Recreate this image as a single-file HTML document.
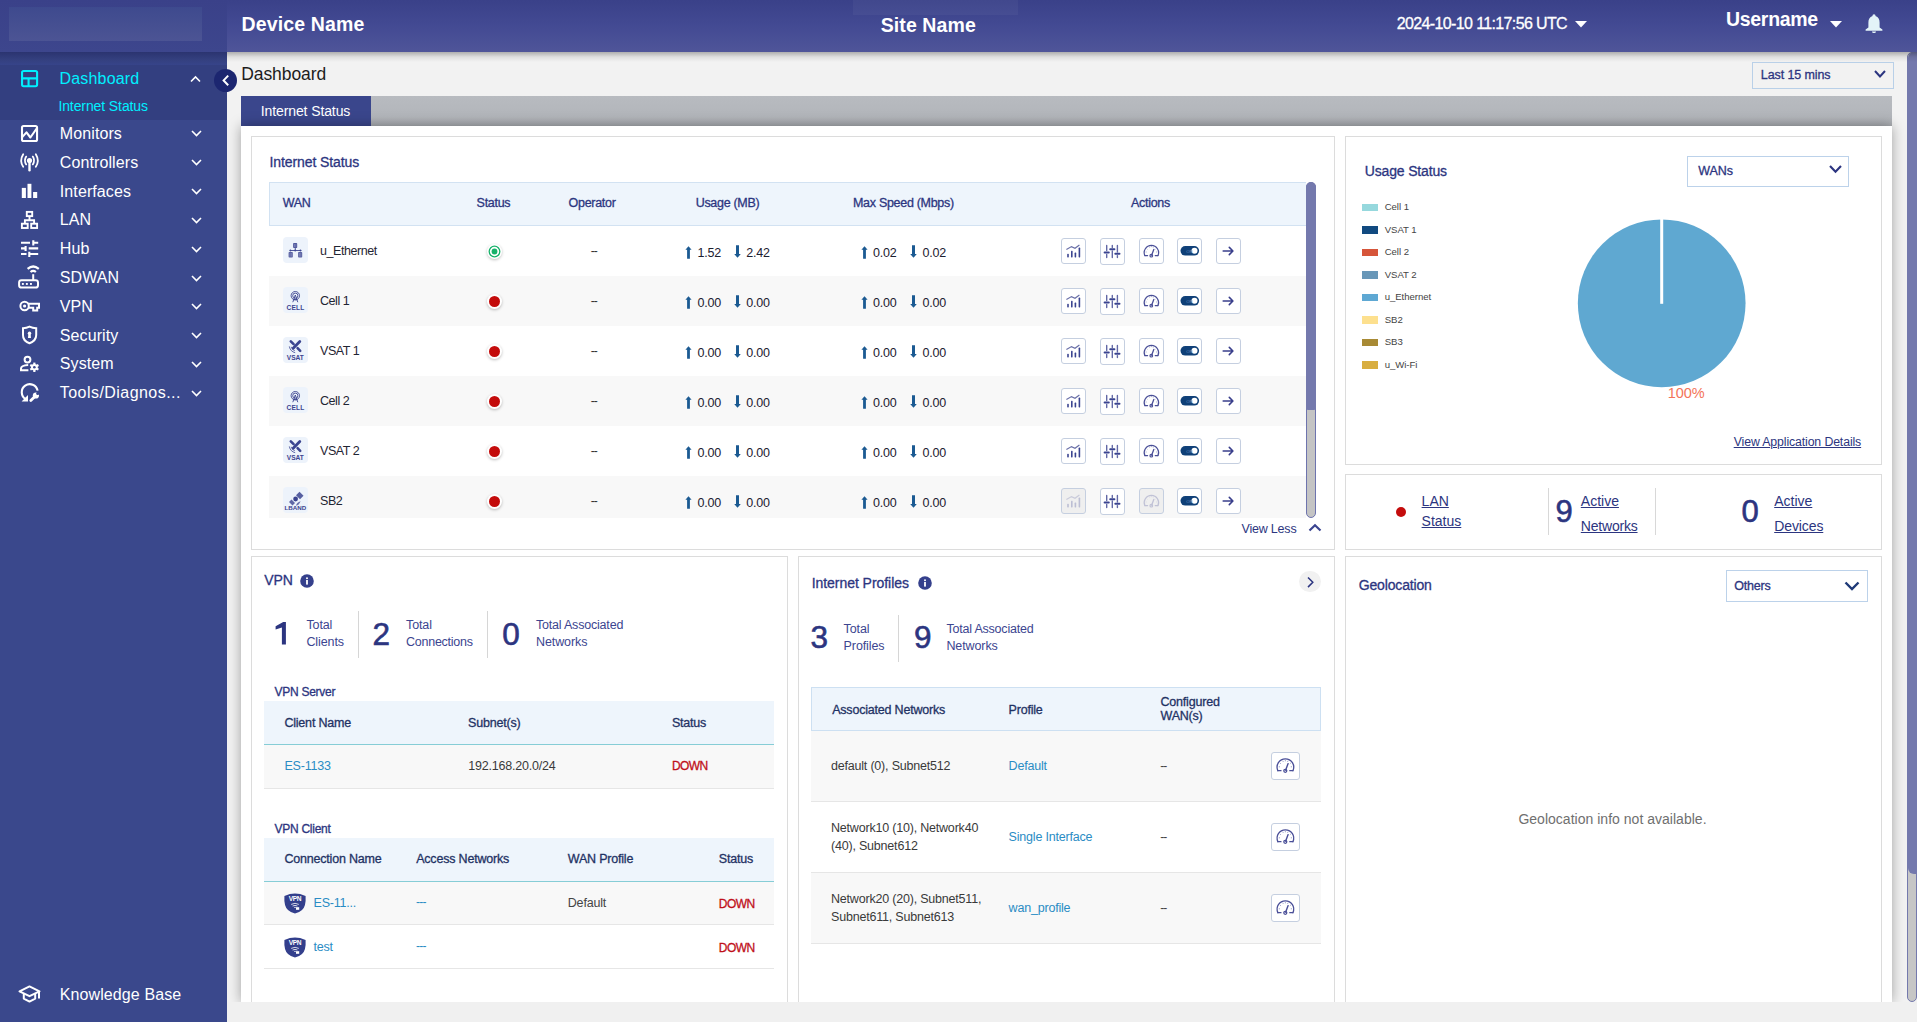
<!DOCTYPE html>
<html><head><meta charset="utf-8"><title>Dashboard</title>
<style>
html,body{margin:0;padding:0;}
body{width:1917px;height:1022px;overflow:hidden;position:relative;background:#f2f2f2;font-family:'Liberation Sans', sans-serif;}
.a{position:absolute;box-sizing:border-box;}
.t{position:absolute;white-space:nowrap;}
svg.a{overflow:visible;}
</style></head><body>
<div class="a" style="left:227px;top:0px;width:1690px;height:52px;background:linear-gradient(180deg,#3a4189 0%,#434a93 50%,#4f5599 100%);"></div><div class="a" style="left:0px;top:0px;width:227px;height:52px;background:linear-gradient(180deg,#3a4189 0%,#3d468d 100%);"></div><div class="a" style="left:9px;top:7px;width:193px;height:34px;background:linear-gradient(180deg,#3e4a8e 0%,#4c5494 100%);"></div><div class="a" style="left:853px;top:0px;width:165px;height:15px;background:rgba(255,255,255,0.04);"></div><div class="a" style="left:227px;top:52px;width:1690px;height:10px;background:linear-gradient(180deg,rgba(0,0,0,0.28) 0%,rgba(0,0,0,0.08) 50%,rgba(0,0,0,0) 100%);z-index:5;"></div><div class="t " style="left:241.5px;top:14.79px;font-size:19.5px;line-height:19.5px;color:#fff;font-weight:700;letter-spacing:0.15px;">Device Name</div><div class="t " style="left:880.7px;top:15.89px;font-size:19.5px;line-height:19.5px;color:#fff;font-weight:700;letter-spacing:0.1px;">Site Name</div><div class="t " style="left:1396.8px;top:16.26px;font-size:16px;line-height:16px;color:#fff;-webkit-text-stroke:0.3px currentColor;letter-spacing:-0.63px;">2024-10-10 11:17:56 UTC</div><svg class="a" style="left:1575px;top:21px;" width="12" height="7" viewBox="0 0 12 7"><path d="M0 0 L12 0 L6 6.5 Z" fill="#fff"/></svg><div class="t " style="left:1726px;top:9.89px;font-size:19.5px;line-height:19.5px;color:#fff;font-weight:700;letter-spacing:-0.3px;">Username</div><svg class="a" style="left:1830px;top:21px;" width="12" height="7" viewBox="0 0 12 7"><path d="M0 0 L12 0 L6 6.5 Z" fill="#fff"/></svg><svg class="a" style="left:1865px;top:14px;" width="18" height="21" viewBox="0 0 18 21"><path d="M9 0.3 C10.1 0.3 10.5 1.1 10.5 2 C13.4 2.9 14.6 5.4 14.6 8.6 L14.6 13.6 L17.4 15.4 L17.4 16.8 L0.6 16.8 L0.6 15.4 L3.4 13.6 L3.4 8.6 C3.4 5.4 4.6 2.9 7.5 2 C7.5 1.1 7.9 0.3 9 0.3 Z M7 17.5 L11 17.5 C11 18.5 10.1 19.1 9 19.1 C7.9 19.1 7 18.5 7 17.5 Z" fill="#e3f3f8"/></svg><div class="a" style="left:0px;top:52px;width:227px;height:970px;background:#3a488c;"></div><div class="a" style="left:0px;top:52px;width:227px;height:13px;background:linear-gradient(180deg,#2b3470 0%,#34407f 60%,#37448a 100%);"></div><div class="a" style="left:0px;top:65px;width:227px;height:55px;background:#333f80;"></div><svg class="a" style="left:14px;top:64px;" width="32" height="32" viewBox="0 0 32 32"><g fill="none" stroke="#00f0ff" stroke-width="2.1"><rect x="8.05" y="6.95" width="15.05" height="15.25" rx="1.6"/><path d="M8 14.4 H23.1 M14.56 14.4 V22.2"/></g></svg><div class="t " style="left:59.4px;top:71.06px;font-size:16px;line-height:16px;color:#00f0ff;letter-spacing:0.2px;">Dashboard</div><svg class="a" style="left:190px;top:76px;" width="11" height="6" viewBox="0 0 11 6"><path d="M1 5.5 L5.5 1 L10 5.5" fill="none" stroke="#fff" stroke-width="1.6"/></svg><div class="t " style="left:58.4px;top:99.35px;font-size:14px;line-height:14px;color:#00f0ff;letter-spacing:-0.1px;">Internet Status</div><div class="t " style="left:59.8px;top:125.86px;font-size:16px;line-height:16px;color:#ffffff;letter-spacing:0.1px;">Monitors</div><svg class="a" style="left:190.5px;top:130.3px;" width="11" height="6" viewBox="0 0 11 6"><path d="M1 1 L5.5 5.5 L10 1" fill="none" stroke="#fff" stroke-width="1.6"/></svg><div class="t " style="left:59.8px;top:154.76px;font-size:16px;line-height:16px;color:#ffffff;letter-spacing:0.1px;">Controllers</div><svg class="a" style="left:190.5px;top:159.2px;" width="11" height="6" viewBox="0 0 11 6"><path d="M1 1 L5.5 5.5 L10 1" fill="none" stroke="#fff" stroke-width="1.6"/></svg><div class="t " style="left:59.8px;top:183.66px;font-size:16px;line-height:16px;color:#ffffff;letter-spacing:0.1px;">Interfaces</div><svg class="a" style="left:190.5px;top:188.1px;" width="11" height="6" viewBox="0 0 11 6"><path d="M1 1 L5.5 5.5 L10 1" fill="none" stroke="#fff" stroke-width="1.6"/></svg><div class="t " style="left:59.8px;top:212.36px;font-size:16px;line-height:16px;color:#ffffff;letter-spacing:0.1px;">LAN</div><svg class="a" style="left:190.5px;top:216.8px;" width="11" height="6" viewBox="0 0 11 6"><path d="M1 1 L5.5 5.5 L10 1" fill="none" stroke="#fff" stroke-width="1.6"/></svg><div class="t " style="left:59.8px;top:241.16px;font-size:16px;line-height:16px;color:#ffffff;letter-spacing:0.1px;">Hub</div><svg class="a" style="left:190.5px;top:245.6px;" width="11" height="6" viewBox="0 0 11 6"><path d="M1 1 L5.5 5.5 L10 1" fill="none" stroke="#fff" stroke-width="1.6"/></svg><div class="t " style="left:59.8px;top:270.06px;font-size:16px;line-height:16px;color:#ffffff;letter-spacing:0.1px;">SDWAN</div><svg class="a" style="left:190.5px;top:274.5px;" width="11" height="6" viewBox="0 0 11 6"><path d="M1 1 L5.5 5.5 L10 1" fill="none" stroke="#fff" stroke-width="1.6"/></svg><div class="t " style="left:59.8px;top:298.86px;font-size:16px;line-height:16px;color:#ffffff;letter-spacing:0.1px;">VPN</div><svg class="a" style="left:190.5px;top:303.3px;" width="11" height="6" viewBox="0 0 11 6"><path d="M1 1 L5.5 5.5 L10 1" fill="none" stroke="#fff" stroke-width="1.6"/></svg><div class="t " style="left:59.8px;top:327.66px;font-size:16px;line-height:16px;color:#ffffff;letter-spacing:0.1px;">Security</div><svg class="a" style="left:190.5px;top:332.1px;" width="11" height="6" viewBox="0 0 11 6"><path d="M1 1 L5.5 5.5 L10 1" fill="none" stroke="#fff" stroke-width="1.6"/></svg><div class="t " style="left:59.8px;top:356.46px;font-size:16px;line-height:16px;color:#ffffff;letter-spacing:0.1px;">System</div><svg class="a" style="left:190.5px;top:360.9px;" width="11" height="6" viewBox="0 0 11 6"><path d="M1 1 L5.5 5.5 L10 1" fill="none" stroke="#fff" stroke-width="1.6"/></svg><div class="t " style="left:59.8px;top:385.26px;font-size:16px;line-height:16px;color:#ffffff;letter-spacing:0.45px;">Tools/Diagnos...</div><svg class="a" style="left:190.5px;top:389.7px;" width="11" height="6" viewBox="0 0 11 6"><path d="M1 1 L5.5 5.5 L10 1" fill="none" stroke="#fff" stroke-width="1.6"/></svg><svg class="a" style="left:14px;top:120px;" width="32" height="32" viewBox="0 0 32 32"><g fill="none" stroke="#ffffff" stroke-width="2.1" stroke-linejoin="round"><rect x="8" y="6" width="15.05" height="15" rx="1.6"/><path d="M8 17.4 L12.5 12.4 L16.4 17.5 L23 8"/></g></svg><svg class="a" style="left:14px;top:148px;" width="32" height="32" viewBox="0 0 32 32"><g fill="none" stroke="#ffffff" stroke-width="1.8" stroke-linecap="round"><path d="M12.2 8.6 Q9.6 12.6 12.2 16.4 M9.2 6.2 Q5.2 12.6 9.2 18.8 M18.8 8.6 Q21.4 12.6 18.8 16.4 M21.8 6.2 Q25.8 12.6 21.8 18.8"/><path d="M15.5 13 V22.2" stroke-width="2.4"/></g><circle cx="15.5" cy="12.6" r="2.6" fill="#ffffff"/></svg><svg class="a" style="left:14px;top:176px;" width="32" height="32" viewBox="0 0 32 32"><g fill="#ffffff"><rect x="7.8" y="11.9" width="4.1" height="10.1"/><rect x="13.5" y="7.8" width="3.9" height="14.2"/><rect x="19.1" y="16" width="4.1" height="6"/></g></svg><svg class="a" style="left:14px;top:204px;" width="32" height="32" viewBox="0 0 32 32"><g fill="none" stroke="#ffffff" stroke-width="1.9"><rect x="12.8" y="7.9" width="5.4" height="4.2"/><path d="M15.5 12.5 V16.2 M10.9 19 V16.2 H20.1 V19"/><rect x="7.9" y="19.7" width="5.8" height="4.3"/><rect x="17.2" y="19.7" width="5.9" height="4.3"/></g></svg><svg class="a" style="left:14px;top:232px;" width="32" height="32" viewBox="0 0 32 32"><g fill="none" stroke="#ffffff" stroke-width="2.1"><path d="M7 10.8 H16 M19.5 10.8 H24.2 M19.3 8.2 V13.6 M7 16.4 H11 M14.7 16.4 H24.2 M11.6 14 V19 M7 22 H12.5 M15.3 22 H24.2 M15.3 19.7 V25"/></g></svg><svg class="a" style="left:14px;top:261px;" width="32" height="32" viewBox="0 0 32 32"><g fill="none" stroke="#ffffff" stroke-width="2"><rect x="5.1" y="19.2" width="18.9" height="7.4" rx="2.4"/><path d="M19.2 13.2 V19"/><path d="M16.5 11 Q19.2 8.8 21.9 11" stroke-width="2.2"/><path d="M13.6 7.8 Q19.2 3.2 24.8 7.8" stroke-width="2.2"/></g><g fill="#ffffff"><rect x="7.9" y="22" width="1.9" height="1.9"/><rect x="11.9" y="22" width="1.9" height="1.9"/><rect x="16" y="22" width="1.9" height="1.9"/></g></svg><svg class="a" style="left:14px;top:290px;" width="32" height="32" viewBox="0 0 32 32"><g fill="none" stroke="#ffffff" stroke-width="2"><circle cx="10.6" cy="16" r="4.2"/><path d="M14.4 13.8 H25 V17.8 H23.2 V20.6 H19.2 V17.8 H14.4"/></g><circle cx="10.6" cy="16" r="1.6" fill="#ffffff"/></svg><svg class="a" style="left:14px;top:318px;" width="32" height="32" viewBox="0 0 32 32"><g fill="none" stroke="#ffffff" stroke-width="2"><path d="M9 10.2 Q12.5 10 15.5 8.6 Q18.5 10 22.2 10.2 V17 Q22.2 22.8 15.5 25.2 Q8.8 22.8 9 17 Z"/></g><circle cx="15.5" cy="15.2" r="1.7" fill="#ffffff"/><path d="M14.4 15.5 H16.6 L17 20 H14 Z" fill="#ffffff"/></svg><svg class="a" style="left:14px;top:347px;" width="32" height="32" viewBox="0 0 32 32"><g fill="none" stroke="#ffffff" stroke-width="2"><circle cx="13.5" cy="12.6" r="2.9"/><path d="M14.2 18 Q7 18.5 7 21.5 V23.2 H14.4"/></g><g fill="#ffffff" transform="translate(20.35 20.3)"><circle r="3.3"/><rect x="-1.1" y="-4.7" width="2.2" height="9.4"/><rect x="-1.1" y="-4.7" width="2.2" height="9.4" transform="rotate(60)"/><rect x="-1.1" y="-4.7" width="2.2" height="9.4" transform="rotate(120)"/></g><circle cx="20.35" cy="20.3" r="1.3" fill="#3a488c"/></svg><svg class="a" style="left:14px;top:376px;" width="32" height="32" viewBox="0 0 32 32"><g fill="none" stroke="#ffffff" stroke-width="2.1"><path d="M23.6 14.6 A8 8 0 1 0 11.6 23"/></g><path d="M7.6 25.4 L14 25.4 L14 19 Z" fill="#ffffff"/><path d="M16.8 24.6 L20.6 20.8" stroke="#ffffff" stroke-width="2.8" stroke-linecap="round"/><circle cx="21.9" cy="19.5" r="3.1" fill="#ffffff"/><circle cx="23.7" cy="17.6" r="1.5" fill="#3a488c"/></svg><div class="t " style="left:59.8px;top:987.26px;font-size:16px;line-height:16px;color:#ffffff;letter-spacing:0.1px;">Knowledge Base</div><svg class="a" style="left:14px;top:978px;" width="32" height="32" viewBox="0 0 32 32"><g fill="none" stroke="#ffffff" stroke-width="2" stroke-linejoin="round"><path d="M5.5 13.4 L15.5 8.4 L25.5 13.4 L15.5 18.2 Z"/><path d="M9.8 15.4 V20.6 L15.5 23.6 L21.2 20.6 V15.4"/><path d="M25 13.6 V20.6"/></g></svg><div class="t " style="left:241.3px;top:65.59px;font-size:17.5px;line-height:17.5px;color:#1c1c1c;letter-spacing:-0.1px;">Dashboard</div><div class="a" style="left:1752px;top:62px;width:142px;height:27px;border:1px solid #b9d0e8;background:#f2f2f2;"></div><div class="t " style="left:1760.8px;top:69.02px;font-size:12.5px;line-height:12.5px;color:#2c3580;-webkit-text-stroke:0.3px currentColor;letter-spacing:-0.1px;">Last 15 mins</div><svg class="a" style="left:1874px;top:70px;" width="12" height="8" viewBox="0 0 12 8"><path d="M1 1 L6 6.5 L11 1" fill="none" stroke="#2c3580" stroke-width="2"/></svg><div class="a" style="left:241px;top:96px;width:1651px;height:30px;background:linear-gradient(180deg,#b8bbc0 0%,#b2b5ba 70%,#a9acb1 100%);"></div><div class="a" style="left:241px;top:96px;width:130px;height:30px;background:#3a468c;"></div><div class="t " style="left:260.7px;top:103.75px;font-size:14px;line-height:14px;color:#fff;letter-spacing:-0.1px;">Internet Status</div><div class="a" style="left:241px;top:126px;width:1651px;height:876px;background:#fff;box-shadow:0 0 12px rgba(0,0,0,0.34);"></div><div class="a" style="left:1907px;top:52px;width:10px;height:950px;background:#c6c6c6;border:1px solid #7479ad;border-radius:6px;"></div><div class="a" style="left:1908px;top:52px;width:9px;height:822px;background:#7479ad;border-radius:6px 0 0 6px / 6px 0 0 6px;"></div><div class="a" style="left:227px;top:1002px;width:1690px;height:20px;background:#f0f0f0;z-index:3;"></div><div class="a" style="left:214px;top:69px;width:23px;height:23px;border-radius:50%;background:#1c2670;z-index:6;"></div><svg class="a" style="left:220.5px;top:73.8px;z-index:7;" width="10" height="13" viewBox="0 0 10 13"><path d="M7.2 1.6 L2.6 6.4 L7.2 11.2" fill="none" stroke="#fff" stroke-width="2"/></svg><div class="a" style="left:251px;top:136px;width:1084px;height:414px;border:1px solid #dcdcdc;background:#fff;"></div><div class="t " style="left:269.5px;top:154.75px;font-size:14px;line-height:14px;color:#2c3580;-webkit-text-stroke:0.3px currentColor;letter-spacing:-0.1px;">Internet Status</div><div class="a" style="left:269px;top:182px;width:1048px;height:336px;overflow:hidden;"><div class="a" style="left:0px;top:0px;width:1037px;height:44px;background:#eef5fc;border:1px solid #d2e2f2;border-right:none;"></div><div class="t " style="left:13.699999999999989px;top:15.32px;font-size:12.5px;line-height:12.5px;color:#2c3580;-webkit-text-stroke:0.3px currentColor;letter-spacing:-0.3px;">WAN</div><div class="t " style="left:207.60000000000002px;top:15.32px;font-size:12.5px;line-height:12.5px;color:#2c3580;-webkit-text-stroke:0.3px currentColor;letter-spacing:-0.3px;">Status</div><div class="t " style="left:299.6px;top:15.32px;font-size:12.5px;line-height:12.5px;color:#2c3580;-webkit-text-stroke:0.3px currentColor;letter-spacing:-0.3px;">Operator</div><div class="t " style="left:426.70000000000005px;top:15.32px;font-size:12.5px;line-height:12.5px;color:#2c3580;-webkit-text-stroke:0.3px currentColor;letter-spacing:-0.3px;">Usage (MB)</div><div class="t " style="left:584px;top:15.32px;font-size:12.5px;line-height:12.5px;color:#2c3580;-webkit-text-stroke:0.3px currentColor;letter-spacing:-0.3px;">Max Speed (Mbps)</div><div class="t " style="left:862px;top:15.32px;font-size:12.5px;line-height:12.5px;color:#2c3580;-webkit-text-stroke:0.3px currentColor;letter-spacing:-0.3px;">Actions</div><div class="a" style="left:14px;top:55px;width:25px;height:26px;border-radius:4px;background:#edf3fb;"></div><svg class="a" style="left:14px;top:55px" width="25" height="26" viewBox="0 0 25 26"><g fill="#3f4892"><rect x="10.1" y="6" width="4.1" height="5" rx="0.8" opacity="0.9"/><rect x="5.6" y="15" width="4.2" height="5.6" rx="0.8" opacity="0.85"/><rect x="15.1" y="15" width="4.1" height="5.6" rx="0.8" opacity="0.85"/><rect x="6.6" y="13.1" width="11.8" height="0.9"/><rect x="11.8" y="11" width="0.9" height="2.4"/><circle cx="7.4" cy="13.5" r="0.9"/><circle cx="12.2" cy="13.5" r="0.9"/><circle cx="17.4" cy="13.5" r="0.9"/></g><g stroke="#9aa0cc" stroke-width="0.5"><path d="M11.5 7 V10 M12.9 7 V10 M7 16 V19.6 M8.4 16 V19.6 M16.4 16 V19.6 M17.8 16 V19.6"/></g></svg><div class="t " style="left:51px;top:62.72px;font-size:12.5px;line-height:12.5px;color:#1f2533;letter-spacing:-0.45px;">u_Ethernet</div><div class="a" style="left:217.5px;top:62.30000000000001px;width:15px;height:15px;border-radius:50%;background:#fff;box-shadow:0 1px 3px rgba(0,0,0,0.25);"></div><svg class="a" style="left:217.5px;top:62.30000000000001px" width="15" height="15" viewBox="0 0 15 15"><circle cx="7.5" cy="7.5" r="5.3" fill="none" stroke="#17b26a" stroke-width="1.3"/><circle cx="7.5" cy="7.5" r="2.9" fill="#17b26a"/></svg><div class="t " style="left:321.79999999999995px;top:63.04px;font-size:12px;line-height:12px;color:#333;letter-spacing:-1px;">--</div><svg class="a" style="left:416px;top:64px" width="7" height="13" viewBox="0 0 7 13"><path d="M3.5 0.2 L6.6 3.8 L4.9 3.8 L4.9 12.8 L2.1 12.8 L2.1 3.8 L0.4 3.8 Z" fill="#1b5a92"/></svg><div class="t " style="left:428.6px;top:65.02px;font-size:12.5px;line-height:12.5px;color:#1c2030;letter-spacing:-0.2px;">1.52</div><svg class="a" style="left:465px;top:63.30000000000001px" width="7" height="13" viewBox="0 0 7 13"><path d="M3.5 12.8 L6.8 9 L5 9 L5 0.2 L2 0.2 L2 9 L0.2 9 Z" fill="#1b5a92"/></svg><div class="t " style="left:477.20000000000005px;top:65.02px;font-size:12.5px;line-height:12.5px;color:#1c2030;letter-spacing:-0.2px;">2.42</div><svg class="a" style="left:592px;top:64px" width="7" height="13" viewBox="0 0 7 13"><path d="M3.5 0.2 L6.6 3.8 L4.9 3.8 L4.9 12.8 L2.1 12.8 L2.1 3.8 L0.4 3.8 Z" fill="#1b5a92"/></svg><div class="t " style="left:604px;top:65.02px;font-size:12.5px;line-height:12.5px;color:#1c2030;letter-spacing:-0.2px;">0.02</div><svg class="a" style="left:641px;top:63.30000000000001px" width="7" height="13" viewBox="0 0 7 13"><path d="M3.5 12.8 L6.8 9 L5 9 L5 0.2 L2 0.2 L2 9 L0.2 9 Z" fill="#1b5a92"/></svg><div class="t " style="left:653.6px;top:65.02px;font-size:12.5px;line-height:12.5px;color:#1c2030;letter-spacing:-0.2px;">0.02</div><div class="a" style="left:792px;top:56px;width:25px;height:26px;border:1px solid #c5cfe0;border-radius:3px;background:#fff;"></div><svg class="a" style="left:792px;top:56px" width="25" height="26" viewBox="0 0 25 26"><g fill="#3b4490"><rect x="6.2" y="15.8" width="1.6" height="3.6" rx="0.6"/><rect x="10" y="12.8" width="1.6" height="6.6" rx="0.6"/><rect x="13.6" y="14.6" width="1.6" height="4.8" rx="0.6"/><rect x="17.6" y="9.6" width="1.6" height="9.8" rx="0.6"/></g><path d="M5.4 11.6 L10.5 8.6 L14 10.2 L18.4 7" fill="none" stroke="#6a70a8" stroke-width="1.2"/></svg><div class="a" style="left:831px;top:56px;width:25px;height:27px;border:1px solid #c5cfe0;border-radius:3px;background:#fff;"></div><svg class="a" style="left:831px;top:56px" width="25" height="27" viewBox="0 0 25 27"><g stroke="#3b4490" stroke-width="1.5" stroke-linecap="round"><path d="M6.7 7.5 V12.6 M6.7 16.4 V19.5 M12.3 7.5 V9.4 M12.3 13 V19.5 M17.4 7.5 V14 M17.4 17.6 V19.5" stroke="#6268a6" stroke-width="1.4"/><path d="M4.6 14.5 H8.8 M10.2 11.2 H14.4 M15.3 15.8 H19.5" stroke-width="2"/></g></svg><div class="a" style="left:870px;top:56px;width:25px;height:26px;border:1px solid #c5cfe0;border-radius:3px;background:#fff;"></div><svg class="a" style="left:870px;top:56px" width="25" height="26" viewBox="0 0 25 26"><g fill="none" stroke="#4a4f98" stroke-width="1.2" stroke-linecap="round"><path d="M5.85 17.6 A7.2 7.2 0 1 1 18.95 17.6"/><path d="M5.85 17.6 H8.6 M16.2 17.6 H18.95"/><path d="M12.6 17.2 L14.8 11.4" stroke-width="1.3"/><circle cx="12.3" cy="17.7" r="1.3"/></g><g stroke="#8a8fc0" stroke-width="0.7"><path d="M7.6 10.6 L8.4 11.4 M10.2 8.6 L10.6 9.6 M12.4 8 V9.1 M14.6 8.6 L14.2 9.6 M17.2 10.6 L16.4 11.4 M6.6 14 H7.7 M17.1 14 H18.2"/></g></svg><div class="a" style="left:908px;top:56px;width:25px;height:26px;border:1px solid #c5cfe0;border-radius:3px;background:#fff;"></div><svg class="a" style="left:908px;top:56px" width="25" height="26" viewBox="0 0 25 26"><rect x="3.5" y="8" width="18.6" height="9.6" rx="4.8" fill="#0f4078"/><circle cx="17.5" cy="12.8" r="3" fill="#fff"/><text x="9.2" y="14.5" font-family="Liberation Sans" font-size="4.2" fill="#6d8fbf">ON</text></svg><div class="a" style="left:947px;top:56px;width:25px;height:26px;border:1px solid #c5cfe0;border-radius:3px;background:#fff;"></div><svg class="a" style="left:947px;top:56px" width="25" height="26" viewBox="0 0 25 26"><g fill="none" stroke="#3a3f8c" stroke-width="1.6" stroke-linecap="round" stroke-linejoin="round"><path d="M7.2 13 H16.6 M13.3 9.4 L16.9 13 L13.3 16.6"/></g></svg><div class="a" style="left:0px;top:94px;width:1037px;height:50px;background:#f8f8f8;"></div><div class="a" style="left:14px;top:105px;width:25px;height:26px;border-radius:4px;background:#edf3fb;"></div><svg class="a" style="left:14px;top:105px" width="25" height="26" viewBox="0 0 25 26"><g fill="none" stroke="#3b4490" stroke-width="0.9"><circle cx="12.3" cy="8.7" r="4.2"/><circle cx="12.3" cy="8.7" r="2.6"/><path d="M12.3 8 L9.8 15.2 M12.3 8 L14.8 15.2 M10.6 12.6 H14"/></g><text x="12.5" y="22.8" font-family="Liberation Sans" font-weight="700" font-size="6.6" fill="#3b4490" text-anchor="middle" letter-spacing="0.2">CELL</text></svg><div class="t " style="left:51px;top:112.72px;font-size:12.5px;line-height:12.5px;color:#1f2533;letter-spacing:-0.45px;">Cell 1</div><div class="a" style="left:217.5px;top:112.30000000000001px;width:15px;height:15px;border-radius:50%;background:#fff;box-shadow:0 1px 3px rgba(0,0,0,0.25);"></div><div class="a" style="left:219.5px;top:114.30000000000001px;width:11px;height:11px;border-radius:50%;background:#c40c0c;"></div><div class="t " style="left:321.79999999999995px;top:113.04px;font-size:12px;line-height:12px;color:#333;letter-spacing:-1px;">--</div><svg class="a" style="left:416px;top:114px" width="7" height="13" viewBox="0 0 7 13"><path d="M3.5 0.2 L6.6 3.8 L4.9 3.8 L4.9 12.8 L2.1 12.8 L2.1 3.8 L0.4 3.8 Z" fill="#1b5a92"/></svg><div class="t " style="left:428.6px;top:115.02px;font-size:12.5px;line-height:12.5px;color:#1c2030;letter-spacing:-0.2px;">0.00</div><svg class="a" style="left:465px;top:113.30000000000001px" width="7" height="13" viewBox="0 0 7 13"><path d="M3.5 12.8 L6.8 9 L5 9 L5 0.2 L2 0.2 L2 9 L0.2 9 Z" fill="#1b5a92"/></svg><div class="t " style="left:477.20000000000005px;top:115.02px;font-size:12.5px;line-height:12.5px;color:#1c2030;letter-spacing:-0.2px;">0.00</div><svg class="a" style="left:592px;top:114px" width="7" height="13" viewBox="0 0 7 13"><path d="M3.5 0.2 L6.6 3.8 L4.9 3.8 L4.9 12.8 L2.1 12.8 L2.1 3.8 L0.4 3.8 Z" fill="#1b5a92"/></svg><div class="t " style="left:604px;top:115.02px;font-size:12.5px;line-height:12.5px;color:#1c2030;letter-spacing:-0.2px;">0.00</div><svg class="a" style="left:641px;top:113.30000000000001px" width="7" height="13" viewBox="0 0 7 13"><path d="M3.5 12.8 L6.8 9 L5 9 L5 0.2 L2 0.2 L2 9 L0.2 9 Z" fill="#1b5a92"/></svg><div class="t " style="left:653.6px;top:115.02px;font-size:12.5px;line-height:12.5px;color:#1c2030;letter-spacing:-0.2px;">0.00</div><div class="a" style="left:792px;top:106px;width:25px;height:26px;border:1px solid #c5cfe0;border-radius:3px;background:#fff;"></div><svg class="a" style="left:792px;top:106px" width="25" height="26" viewBox="0 0 25 26"><g fill="#3b4490"><rect x="6.2" y="15.8" width="1.6" height="3.6" rx="0.6"/><rect x="10" y="12.8" width="1.6" height="6.6" rx="0.6"/><rect x="13.6" y="14.6" width="1.6" height="4.8" rx="0.6"/><rect x="17.6" y="9.6" width="1.6" height="9.8" rx="0.6"/></g><path d="M5.4 11.6 L10.5 8.6 L14 10.2 L18.4 7" fill="none" stroke="#6a70a8" stroke-width="1.2"/></svg><div class="a" style="left:831px;top:106px;width:25px;height:27px;border:1px solid #c5cfe0;border-radius:3px;background:#fff;"></div><svg class="a" style="left:831px;top:106px" width="25" height="27" viewBox="0 0 25 27"><g stroke="#3b4490" stroke-width="1.5" stroke-linecap="round"><path d="M6.7 7.5 V12.6 M6.7 16.4 V19.5 M12.3 7.5 V9.4 M12.3 13 V19.5 M17.4 7.5 V14 M17.4 17.6 V19.5" stroke="#6268a6" stroke-width="1.4"/><path d="M4.6 14.5 H8.8 M10.2 11.2 H14.4 M15.3 15.8 H19.5" stroke-width="2"/></g></svg><div class="a" style="left:870px;top:106px;width:25px;height:26px;border:1px solid #c5cfe0;border-radius:3px;background:#fff;"></div><svg class="a" style="left:870px;top:106px" width="25" height="26" viewBox="0 0 25 26"><g fill="none" stroke="#4a4f98" stroke-width="1.2" stroke-linecap="round"><path d="M5.85 17.6 A7.2 7.2 0 1 1 18.95 17.6"/><path d="M5.85 17.6 H8.6 M16.2 17.6 H18.95"/><path d="M12.6 17.2 L14.8 11.4" stroke-width="1.3"/><circle cx="12.3" cy="17.7" r="1.3"/></g><g stroke="#8a8fc0" stroke-width="0.7"><path d="M7.6 10.6 L8.4 11.4 M10.2 8.6 L10.6 9.6 M12.4 8 V9.1 M14.6 8.6 L14.2 9.6 M17.2 10.6 L16.4 11.4 M6.6 14 H7.7 M17.1 14 H18.2"/></g></svg><div class="a" style="left:908px;top:106px;width:25px;height:26px;border:1px solid #c5cfe0;border-radius:3px;background:#fff;"></div><svg class="a" style="left:908px;top:106px" width="25" height="26" viewBox="0 0 25 26"><rect x="3.5" y="8" width="18.6" height="9.6" rx="4.8" fill="#0f4078"/><circle cx="17.5" cy="12.8" r="3" fill="#fff"/><text x="9.2" y="14.5" font-family="Liberation Sans" font-size="4.2" fill="#6d8fbf">ON</text></svg><div class="a" style="left:947px;top:106px;width:25px;height:26px;border:1px solid #c5cfe0;border-radius:3px;background:#fff;"></div><svg class="a" style="left:947px;top:106px" width="25" height="26" viewBox="0 0 25 26"><g fill="none" stroke="#3a3f8c" stroke-width="1.6" stroke-linecap="round" stroke-linejoin="round"><path d="M7.2 13 H16.6 M13.3 9.4 L16.9 13 L13.3 16.6"/></g></svg><div class="a" style="left:14px;top:155px;width:25px;height:26px;border-radius:4px;background:#edf3fb;"></div><svg class="a" style="left:14px;top:155px" width="25" height="26" viewBox="0 0 25 26"><g stroke="#3b4490" stroke-linecap="round"><path d="M7.8 4.4 L10.6 7.2 M14.6 11.2 L17.2 13.8" stroke-width="2.6"/><path d="M16.8 4.6 L10.2 11.2" stroke-width="2.8"/><path d="M6.4 9.8 Q7.4 14.6 11.8 15.6 M8.4 10.2 Q9 13 11.4 13.6" fill="none" stroke-width="0.8"/></g><text x="12.3" y="23.2" font-family="Liberation Sans" font-weight="700" font-size="6.6" fill="#3b4490" text-anchor="middle">VSAT</text></svg><div class="t " style="left:51px;top:162.72px;font-size:12.5px;line-height:12.5px;color:#1f2533;letter-spacing:-0.45px;">VSAT 1</div><div class="a" style="left:217.5px;top:162.3px;width:15px;height:15px;border-radius:50%;background:#fff;box-shadow:0 1px 3px rgba(0,0,0,0.25);"></div><div class="a" style="left:219.5px;top:164.3px;width:11px;height:11px;border-radius:50%;background:#c40c0c;"></div><div class="t " style="left:321.79999999999995px;top:163.04px;font-size:12px;line-height:12px;color:#333;letter-spacing:-1px;">--</div><svg class="a" style="left:416px;top:164px" width="7" height="13" viewBox="0 0 7 13"><path d="M3.5 0.2 L6.6 3.8 L4.9 3.8 L4.9 12.8 L2.1 12.8 L2.1 3.8 L0.4 3.8 Z" fill="#1b5a92"/></svg><div class="t " style="left:428.6px;top:165.02px;font-size:12.5px;line-height:12.5px;color:#1c2030;letter-spacing:-0.2px;">0.00</div><svg class="a" style="left:465px;top:163.3px" width="7" height="13" viewBox="0 0 7 13"><path d="M3.5 12.8 L6.8 9 L5 9 L5 0.2 L2 0.2 L2 9 L0.2 9 Z" fill="#1b5a92"/></svg><div class="t " style="left:477.20000000000005px;top:165.02px;font-size:12.5px;line-height:12.5px;color:#1c2030;letter-spacing:-0.2px;">0.00</div><svg class="a" style="left:592px;top:164px" width="7" height="13" viewBox="0 0 7 13"><path d="M3.5 0.2 L6.6 3.8 L4.9 3.8 L4.9 12.8 L2.1 12.8 L2.1 3.8 L0.4 3.8 Z" fill="#1b5a92"/></svg><div class="t " style="left:604px;top:165.02px;font-size:12.5px;line-height:12.5px;color:#1c2030;letter-spacing:-0.2px;">0.00</div><svg class="a" style="left:641px;top:163.3px" width="7" height="13" viewBox="0 0 7 13"><path d="M3.5 12.8 L6.8 9 L5 9 L5 0.2 L2 0.2 L2 9 L0.2 9 Z" fill="#1b5a92"/></svg><div class="t " style="left:653.6px;top:165.02px;font-size:12.5px;line-height:12.5px;color:#1c2030;letter-spacing:-0.2px;">0.00</div><div class="a" style="left:792px;top:156px;width:25px;height:26px;border:1px solid #c5cfe0;border-radius:3px;background:#fff;"></div><svg class="a" style="left:792px;top:156px" width="25" height="26" viewBox="0 0 25 26"><g fill="#3b4490"><rect x="6.2" y="15.8" width="1.6" height="3.6" rx="0.6"/><rect x="10" y="12.8" width="1.6" height="6.6" rx="0.6"/><rect x="13.6" y="14.6" width="1.6" height="4.8" rx="0.6"/><rect x="17.6" y="9.6" width="1.6" height="9.8" rx="0.6"/></g><path d="M5.4 11.6 L10.5 8.6 L14 10.2 L18.4 7" fill="none" stroke="#6a70a8" stroke-width="1.2"/></svg><div class="a" style="left:831px;top:156px;width:25px;height:27px;border:1px solid #c5cfe0;border-radius:3px;background:#fff;"></div><svg class="a" style="left:831px;top:156px" width="25" height="27" viewBox="0 0 25 27"><g stroke="#3b4490" stroke-width="1.5" stroke-linecap="round"><path d="M6.7 7.5 V12.6 M6.7 16.4 V19.5 M12.3 7.5 V9.4 M12.3 13 V19.5 M17.4 7.5 V14 M17.4 17.6 V19.5" stroke="#6268a6" stroke-width="1.4"/><path d="M4.6 14.5 H8.8 M10.2 11.2 H14.4 M15.3 15.8 H19.5" stroke-width="2"/></g></svg><div class="a" style="left:870px;top:156px;width:25px;height:26px;border:1px solid #c5cfe0;border-radius:3px;background:#fff;"></div><svg class="a" style="left:870px;top:156px" width="25" height="26" viewBox="0 0 25 26"><g fill="none" stroke="#4a4f98" stroke-width="1.2" stroke-linecap="round"><path d="M5.85 17.6 A7.2 7.2 0 1 1 18.95 17.6"/><path d="M5.85 17.6 H8.6 M16.2 17.6 H18.95"/><path d="M12.6 17.2 L14.8 11.4" stroke-width="1.3"/><circle cx="12.3" cy="17.7" r="1.3"/></g><g stroke="#8a8fc0" stroke-width="0.7"><path d="M7.6 10.6 L8.4 11.4 M10.2 8.6 L10.6 9.6 M12.4 8 V9.1 M14.6 8.6 L14.2 9.6 M17.2 10.6 L16.4 11.4 M6.6 14 H7.7 M17.1 14 H18.2"/></g></svg><div class="a" style="left:908px;top:156px;width:25px;height:26px;border:1px solid #c5cfe0;border-radius:3px;background:#fff;"></div><svg class="a" style="left:908px;top:156px" width="25" height="26" viewBox="0 0 25 26"><rect x="3.5" y="8" width="18.6" height="9.6" rx="4.8" fill="#0f4078"/><circle cx="17.5" cy="12.8" r="3" fill="#fff"/><text x="9.2" y="14.5" font-family="Liberation Sans" font-size="4.2" fill="#6d8fbf">ON</text></svg><div class="a" style="left:947px;top:156px;width:25px;height:26px;border:1px solid #c5cfe0;border-radius:3px;background:#fff;"></div><svg class="a" style="left:947px;top:156px" width="25" height="26" viewBox="0 0 25 26"><g fill="none" stroke="#3a3f8c" stroke-width="1.6" stroke-linecap="round" stroke-linejoin="round"><path d="M7.2 13 H16.6 M13.3 9.4 L16.9 13 L13.3 16.6"/></g></svg><div class="a" style="left:0px;top:194px;width:1037px;height:50px;background:#f8f8f8;"></div><div class="a" style="left:14px;top:205px;width:25px;height:26px;border-radius:4px;background:#edf3fb;"></div><svg class="a" style="left:14px;top:205px" width="25" height="26" viewBox="0 0 25 26"><g fill="none" stroke="#3b4490" stroke-width="0.9"><circle cx="12.3" cy="8.7" r="4.2"/><circle cx="12.3" cy="8.7" r="2.6"/><path d="M12.3 8 L9.8 15.2 M12.3 8 L14.8 15.2 M10.6 12.6 H14"/></g><text x="12.5" y="22.8" font-family="Liberation Sans" font-weight="700" font-size="6.6" fill="#3b4490" text-anchor="middle" letter-spacing="0.2">CELL</text></svg><div class="t " style="left:51px;top:212.72px;font-size:12.5px;line-height:12.5px;color:#1f2533;letter-spacing:-0.45px;">Cell 2</div><div class="a" style="left:217.5px;top:212.3px;width:15px;height:15px;border-radius:50%;background:#fff;box-shadow:0 1px 3px rgba(0,0,0,0.25);"></div><div class="a" style="left:219.5px;top:214.3px;width:11px;height:11px;border-radius:50%;background:#c40c0c;"></div><div class="t " style="left:321.79999999999995px;top:213.04px;font-size:12px;line-height:12px;color:#333;letter-spacing:-1px;">--</div><svg class="a" style="left:416px;top:214px" width="7" height="13" viewBox="0 0 7 13"><path d="M3.5 0.2 L6.6 3.8 L4.9 3.8 L4.9 12.8 L2.1 12.8 L2.1 3.8 L0.4 3.8 Z" fill="#1b5a92"/></svg><div class="t " style="left:428.6px;top:215.02px;font-size:12.5px;line-height:12.5px;color:#1c2030;letter-spacing:-0.2px;">0.00</div><svg class="a" style="left:465px;top:213.3px" width="7" height="13" viewBox="0 0 7 13"><path d="M3.5 12.8 L6.8 9 L5 9 L5 0.2 L2 0.2 L2 9 L0.2 9 Z" fill="#1b5a92"/></svg><div class="t " style="left:477.20000000000005px;top:215.02px;font-size:12.5px;line-height:12.5px;color:#1c2030;letter-spacing:-0.2px;">0.00</div><svg class="a" style="left:592px;top:214px" width="7" height="13" viewBox="0 0 7 13"><path d="M3.5 0.2 L6.6 3.8 L4.9 3.8 L4.9 12.8 L2.1 12.8 L2.1 3.8 L0.4 3.8 Z" fill="#1b5a92"/></svg><div class="t " style="left:604px;top:215.02px;font-size:12.5px;line-height:12.5px;color:#1c2030;letter-spacing:-0.2px;">0.00</div><svg class="a" style="left:641px;top:213.3px" width="7" height="13" viewBox="0 0 7 13"><path d="M3.5 12.8 L6.8 9 L5 9 L5 0.2 L2 0.2 L2 9 L0.2 9 Z" fill="#1b5a92"/></svg><div class="t " style="left:653.6px;top:215.02px;font-size:12.5px;line-height:12.5px;color:#1c2030;letter-spacing:-0.2px;">0.00</div><div class="a" style="left:792px;top:206px;width:25px;height:26px;border:1px solid #c5cfe0;border-radius:3px;background:#fff;"></div><svg class="a" style="left:792px;top:206px" width="25" height="26" viewBox="0 0 25 26"><g fill="#3b4490"><rect x="6.2" y="15.8" width="1.6" height="3.6" rx="0.6"/><rect x="10" y="12.8" width="1.6" height="6.6" rx="0.6"/><rect x="13.6" y="14.6" width="1.6" height="4.8" rx="0.6"/><rect x="17.6" y="9.6" width="1.6" height="9.8" rx="0.6"/></g><path d="M5.4 11.6 L10.5 8.6 L14 10.2 L18.4 7" fill="none" stroke="#6a70a8" stroke-width="1.2"/></svg><div class="a" style="left:831px;top:206px;width:25px;height:27px;border:1px solid #c5cfe0;border-radius:3px;background:#fff;"></div><svg class="a" style="left:831px;top:206px" width="25" height="27" viewBox="0 0 25 27"><g stroke="#3b4490" stroke-width="1.5" stroke-linecap="round"><path d="M6.7 7.5 V12.6 M6.7 16.4 V19.5 M12.3 7.5 V9.4 M12.3 13 V19.5 M17.4 7.5 V14 M17.4 17.6 V19.5" stroke="#6268a6" stroke-width="1.4"/><path d="M4.6 14.5 H8.8 M10.2 11.2 H14.4 M15.3 15.8 H19.5" stroke-width="2"/></g></svg><div class="a" style="left:870px;top:206px;width:25px;height:26px;border:1px solid #c5cfe0;border-radius:3px;background:#fff;"></div><svg class="a" style="left:870px;top:206px" width="25" height="26" viewBox="0 0 25 26"><g fill="none" stroke="#4a4f98" stroke-width="1.2" stroke-linecap="round"><path d="M5.85 17.6 A7.2 7.2 0 1 1 18.95 17.6"/><path d="M5.85 17.6 H8.6 M16.2 17.6 H18.95"/><path d="M12.6 17.2 L14.8 11.4" stroke-width="1.3"/><circle cx="12.3" cy="17.7" r="1.3"/></g><g stroke="#8a8fc0" stroke-width="0.7"><path d="M7.6 10.6 L8.4 11.4 M10.2 8.6 L10.6 9.6 M12.4 8 V9.1 M14.6 8.6 L14.2 9.6 M17.2 10.6 L16.4 11.4 M6.6 14 H7.7 M17.1 14 H18.2"/></g></svg><div class="a" style="left:908px;top:206px;width:25px;height:26px;border:1px solid #c5cfe0;border-radius:3px;background:#fff;"></div><svg class="a" style="left:908px;top:206px" width="25" height="26" viewBox="0 0 25 26"><rect x="3.5" y="8" width="18.6" height="9.6" rx="4.8" fill="#0f4078"/><circle cx="17.5" cy="12.8" r="3" fill="#fff"/><text x="9.2" y="14.5" font-family="Liberation Sans" font-size="4.2" fill="#6d8fbf">ON</text></svg><div class="a" style="left:947px;top:206px;width:25px;height:26px;border:1px solid #c5cfe0;border-radius:3px;background:#fff;"></div><svg class="a" style="left:947px;top:206px" width="25" height="26" viewBox="0 0 25 26"><g fill="none" stroke="#3a3f8c" stroke-width="1.6" stroke-linecap="round" stroke-linejoin="round"><path d="M7.2 13 H16.6 M13.3 9.4 L16.9 13 L13.3 16.6"/></g></svg><div class="a" style="left:14px;top:255px;width:25px;height:26px;border-radius:4px;background:#edf3fb;"></div><svg class="a" style="left:14px;top:255px" width="25" height="26" viewBox="0 0 25 26"><g stroke="#3b4490" stroke-linecap="round"><path d="M7.8 4.4 L10.6 7.2 M14.6 11.2 L17.2 13.8" stroke-width="2.6"/><path d="M16.8 4.6 L10.2 11.2" stroke-width="2.8"/><path d="M6.4 9.8 Q7.4 14.6 11.8 15.6 M8.4 10.2 Q9 13 11.4 13.6" fill="none" stroke-width="0.8"/></g><text x="12.3" y="23.2" font-family="Liberation Sans" font-weight="700" font-size="6.6" fill="#3b4490" text-anchor="middle">VSAT</text></svg><div class="t " style="left:51px;top:262.72px;font-size:12.5px;line-height:12.5px;color:#1f2533;letter-spacing:-0.45px;">VSAT 2</div><div class="a" style="left:217.5px;top:262.3px;width:15px;height:15px;border-radius:50%;background:#fff;box-shadow:0 1px 3px rgba(0,0,0,0.25);"></div><div class="a" style="left:219.5px;top:264.3px;width:11px;height:11px;border-radius:50%;background:#c40c0c;"></div><div class="t " style="left:321.79999999999995px;top:263.04px;font-size:12px;line-height:12px;color:#333;letter-spacing:-1px;">--</div><svg class="a" style="left:416px;top:264px" width="7" height="13" viewBox="0 0 7 13"><path d="M3.5 0.2 L6.6 3.8 L4.9 3.8 L4.9 12.8 L2.1 12.8 L2.1 3.8 L0.4 3.8 Z" fill="#1b5a92"/></svg><div class="t " style="left:428.6px;top:265.02px;font-size:12.5px;line-height:12.5px;color:#1c2030;letter-spacing:-0.2px;">0.00</div><svg class="a" style="left:465px;top:263.3px" width="7" height="13" viewBox="0 0 7 13"><path d="M3.5 12.8 L6.8 9 L5 9 L5 0.2 L2 0.2 L2 9 L0.2 9 Z" fill="#1b5a92"/></svg><div class="t " style="left:477.20000000000005px;top:265.02px;font-size:12.5px;line-height:12.5px;color:#1c2030;letter-spacing:-0.2px;">0.00</div><svg class="a" style="left:592px;top:264px" width="7" height="13" viewBox="0 0 7 13"><path d="M3.5 0.2 L6.6 3.8 L4.9 3.8 L4.9 12.8 L2.1 12.8 L2.1 3.8 L0.4 3.8 Z" fill="#1b5a92"/></svg><div class="t " style="left:604px;top:265.02px;font-size:12.5px;line-height:12.5px;color:#1c2030;letter-spacing:-0.2px;">0.00</div><svg class="a" style="left:641px;top:263.3px" width="7" height="13" viewBox="0 0 7 13"><path d="M3.5 12.8 L6.8 9 L5 9 L5 0.2 L2 0.2 L2 9 L0.2 9 Z" fill="#1b5a92"/></svg><div class="t " style="left:653.6px;top:265.02px;font-size:12.5px;line-height:12.5px;color:#1c2030;letter-spacing:-0.2px;">0.00</div><div class="a" style="left:792px;top:256px;width:25px;height:26px;border:1px solid #c5cfe0;border-radius:3px;background:#fff;"></div><svg class="a" style="left:792px;top:256px" width="25" height="26" viewBox="0 0 25 26"><g fill="#3b4490"><rect x="6.2" y="15.8" width="1.6" height="3.6" rx="0.6"/><rect x="10" y="12.8" width="1.6" height="6.6" rx="0.6"/><rect x="13.6" y="14.6" width="1.6" height="4.8" rx="0.6"/><rect x="17.6" y="9.6" width="1.6" height="9.8" rx="0.6"/></g><path d="M5.4 11.6 L10.5 8.6 L14 10.2 L18.4 7" fill="none" stroke="#6a70a8" stroke-width="1.2"/></svg><div class="a" style="left:831px;top:256px;width:25px;height:27px;border:1px solid #c5cfe0;border-radius:3px;background:#fff;"></div><svg class="a" style="left:831px;top:256px" width="25" height="27" viewBox="0 0 25 27"><g stroke="#3b4490" stroke-width="1.5" stroke-linecap="round"><path d="M6.7 7.5 V12.6 M6.7 16.4 V19.5 M12.3 7.5 V9.4 M12.3 13 V19.5 M17.4 7.5 V14 M17.4 17.6 V19.5" stroke="#6268a6" stroke-width="1.4"/><path d="M4.6 14.5 H8.8 M10.2 11.2 H14.4 M15.3 15.8 H19.5" stroke-width="2"/></g></svg><div class="a" style="left:870px;top:256px;width:25px;height:26px;border:1px solid #c5cfe0;border-radius:3px;background:#fff;"></div><svg class="a" style="left:870px;top:256px" width="25" height="26" viewBox="0 0 25 26"><g fill="none" stroke="#4a4f98" stroke-width="1.2" stroke-linecap="round"><path d="M5.85 17.6 A7.2 7.2 0 1 1 18.95 17.6"/><path d="M5.85 17.6 H8.6 M16.2 17.6 H18.95"/><path d="M12.6 17.2 L14.8 11.4" stroke-width="1.3"/><circle cx="12.3" cy="17.7" r="1.3"/></g><g stroke="#8a8fc0" stroke-width="0.7"><path d="M7.6 10.6 L8.4 11.4 M10.2 8.6 L10.6 9.6 M12.4 8 V9.1 M14.6 8.6 L14.2 9.6 M17.2 10.6 L16.4 11.4 M6.6 14 H7.7 M17.1 14 H18.2"/></g></svg><div class="a" style="left:908px;top:256px;width:25px;height:26px;border:1px solid #c5cfe0;border-radius:3px;background:#fff;"></div><svg class="a" style="left:908px;top:256px" width="25" height="26" viewBox="0 0 25 26"><rect x="3.5" y="8" width="18.6" height="9.6" rx="4.8" fill="#0f4078"/><circle cx="17.5" cy="12.8" r="3" fill="#fff"/><text x="9.2" y="14.5" font-family="Liberation Sans" font-size="4.2" fill="#6d8fbf">ON</text></svg><div class="a" style="left:947px;top:256px;width:25px;height:26px;border:1px solid #c5cfe0;border-radius:3px;background:#fff;"></div><svg class="a" style="left:947px;top:256px" width="25" height="26" viewBox="0 0 25 26"><g fill="none" stroke="#3a3f8c" stroke-width="1.6" stroke-linecap="round" stroke-linejoin="round"><path d="M7.2 13 H16.6 M13.3 9.4 L16.9 13 L13.3 16.6"/></g></svg><div class="a" style="left:0px;top:294px;width:1037px;height:50px;background:#f8f8f8;"></div><div class="a" style="left:14px;top:305px;width:25px;height:26px;border-radius:4px;background:#edf3fb;"></div><svg class="a" style="left:14px;top:305px" width="25" height="26" viewBox="0 0 25 26"><g fill="#3b4490"><path d="M16.5 4.8 L20.5 8.8 L17 12.3 L13 8.3 Z" opacity="0.85"/><circle cx="12.6" cy="12" r="2.4"/><path d="M8.5 12.5 L12 16 L9.5 18.5 L6 15 Z" opacity="0.8"/><path d="M17.6 14.2 Q16 18.2 13 18.8 Q13.6 15.6 17.6 14.2 Z" opacity="0.75"/></g><text x="12.3" y="23.3" font-family="Liberation Sans" font-weight="700" font-size="6.2" fill="#3b4490" text-anchor="middle">LBAND</text></svg><div class="t " style="left:51px;top:312.72px;font-size:12.5px;line-height:12.5px;color:#1f2533;letter-spacing:-0.45px;">SB2</div><div class="a" style="left:217.5px;top:312.3px;width:15px;height:15px;border-radius:50%;background:#fff;box-shadow:0 1px 3px rgba(0,0,0,0.25);"></div><div class="a" style="left:219.5px;top:314.3px;width:11px;height:11px;border-radius:50%;background:#c40c0c;"></div><div class="t " style="left:321.79999999999995px;top:313.04px;font-size:12px;line-height:12px;color:#333;letter-spacing:-1px;">--</div><svg class="a" style="left:416px;top:314px" width="7" height="13" viewBox="0 0 7 13"><path d="M3.5 0.2 L6.6 3.8 L4.9 3.8 L4.9 12.8 L2.1 12.8 L2.1 3.8 L0.4 3.8 Z" fill="#1b5a92"/></svg><div class="t " style="left:428.6px;top:315.02px;font-size:12.5px;line-height:12.5px;color:#1c2030;letter-spacing:-0.2px;">0.00</div><svg class="a" style="left:465px;top:313.3px" width="7" height="13" viewBox="0 0 7 13"><path d="M3.5 12.8 L6.8 9 L5 9 L5 0.2 L2 0.2 L2 9 L0.2 9 Z" fill="#1b5a92"/></svg><div class="t " style="left:477.20000000000005px;top:315.02px;font-size:12.5px;line-height:12.5px;color:#1c2030;letter-spacing:-0.2px;">0.00</div><svg class="a" style="left:592px;top:314px" width="7" height="13" viewBox="0 0 7 13"><path d="M3.5 0.2 L6.6 3.8 L4.9 3.8 L4.9 12.8 L2.1 12.8 L2.1 3.8 L0.4 3.8 Z" fill="#1b5a92"/></svg><div class="t " style="left:604px;top:315.02px;font-size:12.5px;line-height:12.5px;color:#1c2030;letter-spacing:-0.2px;">0.00</div><svg class="a" style="left:641px;top:313.3px" width="7" height="13" viewBox="0 0 7 13"><path d="M3.5 12.8 L6.8 9 L5 9 L5 0.2 L2 0.2 L2 9 L0.2 9 Z" fill="#1b5a92"/></svg><div class="t " style="left:653.6px;top:315.02px;font-size:12.5px;line-height:12.5px;color:#1c2030;letter-spacing:-0.2px;">0.00</div><div class="a" style="left:792px;top:306px;width:25px;height:26px;border:1px solid #c5cfe0;border-radius:3px;background:#efefef;"></div><svg class="a" style="left:792px;top:306px" width="25" height="26" viewBox="0 0 25 26"><g opacity="0.28"><g fill="#3b4490"><rect x="6.2" y="15.8" width="1.6" height="3.6" rx="0.6"/><rect x="10" y="12.8" width="1.6" height="6.6" rx="0.6"/><rect x="13.6" y="14.6" width="1.6" height="4.8" rx="0.6"/><rect x="17.6" y="9.6" width="1.6" height="9.8" rx="0.6"/></g><path d="M5.4 11.6 L10.5 8.6 L14 10.2 L18.4 7" fill="none" stroke="#6a70a8" stroke-width="1.2"/></g></svg><div class="a" style="left:831px;top:306px;width:25px;height:27px;border:1px solid #c5cfe0;border-radius:3px;background:#fff;"></div><svg class="a" style="left:831px;top:306px" width="25" height="27" viewBox="0 0 25 27"><g stroke="#3b4490" stroke-width="1.5" stroke-linecap="round"><path d="M6.7 7.5 V12.6 M6.7 16.4 V19.5 M12.3 7.5 V9.4 M12.3 13 V19.5 M17.4 7.5 V14 M17.4 17.6 V19.5" stroke="#6268a6" stroke-width="1.4"/><path d="M4.6 14.5 H8.8 M10.2 11.2 H14.4 M15.3 15.8 H19.5" stroke-width="2"/></g></svg><div class="a" style="left:870px;top:306px;width:25px;height:26px;border:1px solid #c5cfe0;border-radius:3px;background:#efefef;"></div><svg class="a" style="left:870px;top:306px" width="25" height="26" viewBox="0 0 25 26"><g opacity="0.28"><g fill="none" stroke="#4a4f98" stroke-width="1.2" stroke-linecap="round"><path d="M5.85 17.6 A7.2 7.2 0 1 1 18.95 17.6"/><path d="M5.85 17.6 H8.6 M16.2 17.6 H18.95"/><path d="M12.6 17.2 L14.8 11.4" stroke-width="1.3"/><circle cx="12.3" cy="17.7" r="1.3"/></g><g stroke="#8a8fc0" stroke-width="0.7"><path d="M7.6 10.6 L8.4 11.4 M10.2 8.6 L10.6 9.6 M12.4 8 V9.1 M14.6 8.6 L14.2 9.6 M17.2 10.6 L16.4 11.4 M6.6 14 H7.7 M17.1 14 H18.2"/></g></g></svg><div class="a" style="left:908px;top:306px;width:25px;height:26px;border:1px solid #c5cfe0;border-radius:3px;background:#fff;"></div><svg class="a" style="left:908px;top:306px" width="25" height="26" viewBox="0 0 25 26"><rect x="3.5" y="8" width="18.6" height="9.6" rx="4.8" fill="#0f4078"/><circle cx="17.5" cy="12.8" r="3" fill="#fff"/><text x="9.2" y="14.5" font-family="Liberation Sans" font-size="4.2" fill="#6d8fbf">ON</text></svg><div class="a" style="left:947px;top:306px;width:25px;height:26px;border:1px solid #c5cfe0;border-radius:3px;background:#fff;"></div><svg class="a" style="left:947px;top:306px" width="25" height="26" viewBox="0 0 25 26"><g fill="none" stroke="#3a3f8c" stroke-width="1.6" stroke-linecap="round" stroke-linejoin="round"><path d="M7.2 13 H16.6 M13.3 9.4 L16.9 13 L13.3 16.6"/></g></svg><div class="a" style="left:1037px;top:0;width:10px;height:336px;border:1px solid #6e74ae;border-radius:5px;background:#c4c4c4;"></div><div class="a" style="left:1037px;top:0;width:10px;height:228px;border-radius:5px 5px 2px 2px;background:#7479ad;"></div></div><div class="t " style="left:1241.5px;top:523.02px;font-size:12.5px;line-height:12.5px;color:#2c3580;letter-spacing:-0.2px;">View Less</div><svg class="a" style="left:1308px;top:523px;" width="14" height="9" viewBox="0 0 14 9"><path d="M1.5 7.5 L7 2.2 L12.5 7.5" fill="none" stroke="#3a4490" stroke-width="2.2"/></svg><div class="a" style="left:1345px;top:136px;width:537px;height:329px;border:1px solid #dcdcdc;background:#fff;"></div><div class="t " style="left:1364.7px;top:163.95px;font-size:14px;line-height:14px;color:#2c3580;-webkit-text-stroke:0.3px currentColor;letter-spacing:-0.15px;">Usage Status</div><div class="a" style="left:1687px;top:156px;width:162px;height:31px;border:1px solid #bcd2ea;background:#fff;"></div><div class="t " style="left:1698.3px;top:165.22px;font-size:12.5px;line-height:12.5px;color:#2c3580;-webkit-text-stroke:0.3px currentColor;letter-spacing:-0.1px;">WANs</div><svg class="a" style="left:1828.5px;top:165px;" width="13" height="9" viewBox="0 0 13 9"><path d="M1 1 L6.5 6.8 L12 1" fill="none" stroke="#2c3580" stroke-width="2.1"/></svg><div class="a" style="left:1361.7px;top:203.8px;width:16.2px;height:7.5px;background:#96d8dd;"></div><div class="t " style="left:1384.7px;top:202.27px;font-size:9.6px;line-height:9.6px;color:#444;letter-spacing:-0.05px;">Cell 1</div><div class="a" style="left:1361.7px;top:226.3px;width:16.2px;height:7.5px;background:#114a80;"></div><div class="t " style="left:1384.7px;top:224.77px;font-size:9.6px;line-height:9.6px;color:#444;letter-spacing:-0.05px;">VSAT 1</div><div class="a" style="left:1361.7px;top:248.8px;width:16.2px;height:7.5px;background:#d6553a;"></div><div class="t " style="left:1384.7px;top:247.27px;font-size:9.6px;line-height:9.6px;color:#444;letter-spacing:-0.05px;">Cell 2</div><div class="a" style="left:1361.7px;top:271.3px;width:16.2px;height:7.5px;background:#6897b8;"></div><div class="t " style="left:1384.7px;top:269.77px;font-size:9.6px;line-height:9.6px;color:#444;letter-spacing:-0.05px;">VSAT 2</div><div class="a" style="left:1361.7px;top:293.8px;width:16.2px;height:7.5px;background:#5ea8d3;"></div><div class="t " style="left:1384.7px;top:292.27px;font-size:9.6px;line-height:9.6px;color:#444;letter-spacing:-0.05px;">u_Ethernet</div><div class="a" style="left:1361.7px;top:316.3px;width:16.2px;height:7.5px;background:#fde08e;"></div><div class="t " style="left:1384.7px;top:314.77px;font-size:9.6px;line-height:9.6px;color:#444;letter-spacing:-0.05px;">SB2</div><div class="a" style="left:1361.7px;top:338.8px;width:16.2px;height:7.5px;background:#a88a35;"></div><div class="t " style="left:1384.7px;top:337.27px;font-size:9.6px;line-height:9.6px;color:#444;letter-spacing:-0.05px;">SB3</div><div class="a" style="left:1361.7px;top:361.3px;width:16.2px;height:7.5px;background:#d8ae40;"></div><div class="t " style="left:1384.7px;top:359.77px;font-size:9.6px;line-height:9.6px;color:#444;letter-spacing:-0.05px;">u_Wi-Fi</div><svg class="a" style="left:1577px;top:219px;" width="170" height="170" viewBox="0 0 170 170"><circle cx="84.7" cy="84.3" r="83.85" fill="#5fa8d1"/><rect x="83.2" y="0" width="3" height="84.8" fill="#fff"/></svg><div class="t " style="left:1667.8px;top:385.63px;font-size:14.5px;line-height:14.5px;color:#f37458;letter-spacing:-0.1px;">100%</div><div class="t " style="left:1733.7px;top:436.19px;font-size:12.3px;line-height:12.3px;color:#2c3580;letter-spacing:-0.12px;text-decoration:underline;text-underline-offset:0.8px;text-decoration-thickness:1px;">View Application Details</div><div class="a" style="left:1345px;top:474px;width:537px;height:76px;border:1px solid #dcdcdc;background:#fff;"></div><div class="a" style="left:1395.8px;top:506.7px;width:10.2px;height:10.2px;border-radius:50%;background:#c40c0c;"></div><div class="t " style="left:1421.6px;top:494.15px;font-size:14px;line-height:14px;color:#2c3580;text-decoration:underline;text-underline-offset:0.6px;text-decoration-thickness:1px;">LAN</div><div class="t " style="left:1421.6px;top:514.15px;font-size:14px;line-height:14px;color:#2c3580;text-decoration:underline;text-underline-offset:0.6px;text-decoration-thickness:1px;">Status</div><div class="a" style="left:1548px;top:488px;width:1px;height:47px;background:#d8d8d8;"></div><div class="t " style="left:1555.5px;top:495.96px;font-size:31px;line-height:31px;color:#2c3580;-webkit-text-stroke:0.6px currentColor;letter-spacing:0px;">9</div><div class="t " style="left:1580.8px;top:494.15px;font-size:14px;line-height:14px;color:#2c3580;text-decoration:underline;text-underline-offset:0.6px;text-decoration-thickness:1px;">Active</div><div class="t " style="left:1580.8px;top:518.55px;font-size:14px;line-height:14px;color:#2c3580;letter-spacing:-0.2px;text-decoration:underline;text-underline-offset:0.6px;text-decoration-thickness:1px;">Networks</div><div class="a" style="left:1655px;top:488px;width:1px;height:47px;background:#d8d8d8;"></div><div class="t " style="left:1741.5px;top:495.96px;font-size:31px;line-height:31px;color:#2c3580;-webkit-text-stroke:0.6px currentColor;letter-spacing:0px;">0</div><div class="t " style="left:1774.2px;top:494.15px;font-size:14px;line-height:14px;color:#2c3580;text-decoration:underline;text-underline-offset:0.6px;text-decoration-thickness:1px;">Active</div><div class="t " style="left:1774.2px;top:518.55px;font-size:14px;line-height:14px;color:#2c3580;letter-spacing:-0.1px;text-decoration:underline;text-underline-offset:0.6px;text-decoration-thickness:1px;">Devices</div><div class="a" style="left:1345px;top:556px;width:537px;height:470px;border:1px solid #dcdcdc;background:#fff;"></div><div class="t " style="left:1358.7px;top:578.15px;font-size:14px;line-height:14px;color:#2c3580;-webkit-text-stroke:0.3px currentColor;letter-spacing:-0.15px;">Geolocation</div><div class="a" style="left:1726px;top:570px;width:142px;height:32px;border:1px solid #bcd2ea;background:#fff;"></div><div class="t " style="left:1734.3px;top:580.32px;font-size:12.5px;line-height:12.5px;color:#2c3580;-webkit-text-stroke:0.3px currentColor;letter-spacing:-0.2px;">Others</div><svg class="a" style="left:1844px;top:581px;" width="16" height="11" viewBox="0 0 16 11"><path d="M1.5 1.5 L8 8 L14.5 1.5" fill="none" stroke="#1f3a78" stroke-width="2.4"/></svg><div class="t" style="left:1312.5px;width:600px;text-align:center;top:811.95px;font-size:14px;line-height:14px;color:#6f6f6f;letter-spacing:0.02px;">Geolocation info not available.</div><div class="a" style="left:251px;top:556px;width:537px;height:470px;border:1px solid #dcdcdc;background:#fff;"></div><div class="t " style="left:264.3px;top:572.85px;font-size:14px;line-height:14px;color:#2c3580;-webkit-text-stroke:0.3px currentColor;letter-spacing:-0.1px;">VPN</div><svg class="a" style="left:299.9px;top:573.9px" width="14" height="14" viewBox="0 0 14 14"><circle cx="7" cy="7" r="6.8" fill="#35408c"/><rect x="6.1" y="6" width="1.8" height="4.6" fill="#fff"/><circle cx="7" cy="4.2" r="1" fill="#fff"/></svg><svg class="a" style="left:270px;top:615px;" width="20" height="35" viewBox="0 0 20 35"><path d="M13.2 6.9 L15.9 6.9 L15.9 29.5 L11.9 29.5 L11.9 12.4 L5.6 14.6 L5.6 11.2 Z" fill="#2c3580"/></svg><div class="t " style="left:306.4px;top:619.12px;font-size:12.5px;line-height:12.5px;color:#3c4590;letter-spacing:-0.1px;">Total</div><div class="t " style="left:306.4px;top:635.72px;font-size:12.5px;line-height:12.5px;color:#3c4590;letter-spacing:-0.1px;">Clients</div><div class="a" style="left:358px;top:611px;width:1px;height:47px;background:#d6d6d6;"></div><div class="t " style="left:372.5px;top:618.64px;font-size:31.5px;line-height:31.5px;color:#2c3580;-webkit-text-stroke:0.6px currentColor;">2</div><div class="t " style="left:406px;top:619.12px;font-size:12.5px;line-height:12.5px;color:#3c4590;letter-spacing:-0.1px;">Total</div><div class="t " style="left:406px;top:635.72px;font-size:12.5px;line-height:12.5px;color:#3c4590;letter-spacing:-0.25px;">Connections</div><div class="a" style="left:487px;top:611px;width:1px;height:47px;background:#d6d6d6;"></div><div class="t " style="left:502.3px;top:618.64px;font-size:31.5px;line-height:31.5px;color:#2c3580;-webkit-text-stroke:0.6px currentColor;">0</div><div class="t " style="left:536px;top:619.12px;font-size:12.5px;line-height:12.5px;color:#3c4590;letter-spacing:-0.2px;">Total Associated</div><div class="t " style="left:536px;top:635.72px;font-size:12.5px;line-height:12.5px;color:#3c4590;letter-spacing:-0.1px;">Networks</div><div class="t " style="left:274.4px;top:686.44px;font-size:12px;line-height:12px;color:#2c3580;-webkit-text-stroke:0.3px currentColor;letter-spacing:-0.25px;">VPN Server</div><div class="a" style="left:264px;top:701px;width:510px;height:44px;background:#eef5fc;border-bottom:1.5px solid #86cdd6;"></div><div class="t " style="left:284.4px;top:716.52px;font-size:12.5px;line-height:12.5px;color:#1f3264;-webkit-text-stroke:0.3px currentColor;letter-spacing:-0.2px;">Client Name</div><div class="t " style="left:468px;top:716.52px;font-size:12.5px;line-height:12.5px;color:#1f3264;-webkit-text-stroke:0.3px currentColor;letter-spacing:-0.2px;">Subnet(s)</div><div class="t " style="left:671.9px;top:716.52px;font-size:12.5px;line-height:12.5px;color:#1f3264;-webkit-text-stroke:0.3px currentColor;letter-spacing:-0.2px;">Status</div><div class="a" style="left:264px;top:745px;width:510px;height:44px;background:#f8f8f8;border-bottom:1px solid #e6e6e6;"></div><div class="t " style="left:284.4px;top:760.22px;font-size:12.5px;line-height:12.5px;color:#2a8cc4;letter-spacing:-0.2px;">ES-1133</div><div class="t " style="left:468.2px;top:760.22px;font-size:12.5px;line-height:12.5px;color:#3a3a3a;letter-spacing:-0.2px;">192.168.20.0/24</div><div class="t " style="left:671.9px;top:760.44px;font-size:12px;line-height:12px;color:#c0101a;-webkit-text-stroke:0.3px currentColor;letter-spacing:-0.55px;">DOWN</div><div class="t " style="left:274.4px;top:823.44px;font-size:12px;line-height:12px;color:#2c3580;-webkit-text-stroke:0.3px currentColor;letter-spacing:-0.25px;">VPN Client</div><div class="a" style="left:264px;top:838px;width:510px;height:44px;background:#eef5fc;border-bottom:1.5px solid #86cdd6;"></div><div class="t " style="left:284.4px;top:853.12px;font-size:12.5px;line-height:12.5px;color:#1f3264;-webkit-text-stroke:0.3px currentColor;letter-spacing:-0.2px;">Connection Name</div><div class="t " style="left:416.2px;top:853.12px;font-size:12.5px;line-height:12.5px;color:#1f3264;-webkit-text-stroke:0.3px currentColor;letter-spacing:-0.2px;">Access Networks</div><div class="t " style="left:567.8px;top:853.12px;font-size:12.5px;line-height:12.5px;color:#1f3264;-webkit-text-stroke:0.3px currentColor;letter-spacing:-0.2px;">WAN Profile</div><div class="t " style="left:718.8px;top:853.12px;font-size:12.5px;line-height:12.5px;color:#1f3264;-webkit-text-stroke:0.3px currentColor;letter-spacing:-0.2px;">Status</div><div class="a" style="left:264px;top:882px;width:510px;height:43px;background:#f8f8f8;border-bottom:1px solid #e6e6e6;"></div><div class="a" style="left:264px;top:925px;width:510px;height:44px;background:#fff;border-bottom:1px solid #e6e6e6;"></div><svg class="a" style="left:284.3px;top:892.8000000000001px;" width="22" height="21" viewBox="0 0 22 21"><path d="M11 0.6 Q16 0.6 21.6 3 Q22.2 13.5 18 17 Q14.6 20 11 20.6 Q7.4 20 4 17 Q-0.2 13.5 0.4 3 Q6 0.6 11 0.6 Z" fill="#333f8c"/><text x="11" y="8.3" font-family="Liberation Sans" font-size="6.6" font-weight="700" fill="#fff" text-anchor="middle" letter-spacing="-0.3">VPN</text><path d="M7.2 11.4 Q11 9.2 14.8 11.4 M8.6 13 Q11 11.8 13.4 13" fill="none" stroke="#fff" stroke-width="0.8"/><circle cx="11" cy="14.4" r="0.7" fill="#fff"/><rect x="12" y="14.2" width="3.2" height="2.6" fill="#fff"/></svg><div class="t " style="left:313.5px;top:897.22px;font-size:12.5px;line-height:12.5px;color:#2a8cc4;letter-spacing:-0.2px;">ES-11...</div><div class="t " style="left:416px;top:896.44px;font-size:12px;line-height:12px;color:#2a8cc4;letter-spacing:-0.8px;">---</div><div class="t " style="left:567.8px;top:897.22px;font-size:12.5px;line-height:12.5px;color:#444;letter-spacing:-0.2px;">Default</div><div class="t " style="left:718.8px;top:898.04px;font-size:12px;line-height:12px;color:#c0101a;-webkit-text-stroke:0.3px currentColor;letter-spacing:-0.55px;">DOWN</div><svg class="a" style="left:284.3px;top:936.6px;" width="22" height="21" viewBox="0 0 22 21"><path d="M11 0.6 Q16 0.6 21.6 3 Q22.2 13.5 18 17 Q14.6 20 11 20.6 Q7.4 20 4 17 Q-0.2 13.5 0.4 3 Q6 0.6 11 0.6 Z" fill="#333f8c"/><text x="11" y="8.3" font-family="Liberation Sans" font-size="6.6" font-weight="700" fill="#fff" text-anchor="middle" letter-spacing="-0.3">VPN</text><path d="M7.2 11.4 Q11 9.2 14.8 11.4 M8.6 13 Q11 11.8 13.4 13" fill="none" stroke="#fff" stroke-width="0.8"/><circle cx="11" cy="14.4" r="0.7" fill="#fff"/><rect x="12" y="14.2" width="3.2" height="2.6" fill="#fff"/></svg><div class="t " style="left:313.5px;top:941.02px;font-size:12.5px;line-height:12.5px;color:#2a8cc4;letter-spacing:-0.2px;">test</div><div class="t " style="left:416px;top:940.24px;font-size:12px;line-height:12px;color:#2a8cc4;letter-spacing:-0.8px;">---</div><div class="t " style="left:718.8px;top:941.84px;font-size:12px;line-height:12px;color:#c0101a;-webkit-text-stroke:0.3px currentColor;letter-spacing:-0.55px;">DOWN</div><div class="a" style="left:798px;top:556px;width:537px;height:470px;border:1px solid #dcdcdc;background:#fff;"></div><div class="t " style="left:811.7px;top:575.75px;font-size:14px;line-height:14px;color:#2c3580;-webkit-text-stroke:0.3px currentColor;letter-spacing:-0.05px;">Internet Profiles</div><svg class="a" style="left:917.9px;top:576.1px" width="14" height="14" viewBox="0 0 14 14"><circle cx="7" cy="7" r="6.8" fill="#35408c"/><rect x="6.1" y="6" width="1.8" height="4.6" fill="#fff"/><circle cx="7" cy="4.2" r="1" fill="#fff"/></svg><div class="a" style="left:1299.3px;top:571px;width:21.4px;height:21.4px;border-radius:50%;background:#f1f1f1;"></div><svg class="a" style="left:1306px;top:575.5px;" width="9" height="13" viewBox="0 0 9 13"><path d="M2 1.5 L6.8 6.3 L2 11.1" fill="none" stroke="#2c3580" stroke-width="1.5"/></svg><div class="t " style="left:810.5px;top:622.14px;font-size:31.5px;line-height:31.5px;color:#2c3580;-webkit-text-stroke:0.6px currentColor;">3</div><div class="t " style="left:843.6px;top:622.52px;font-size:12.5px;line-height:12.5px;color:#3c4590;letter-spacing:-0.1px;">Total</div><div class="t " style="left:843.6px;top:639.62px;font-size:12.5px;line-height:12.5px;color:#3c4590;letter-spacing:-0.1px;">Profiles</div><div class="a" style="left:898px;top:615px;width:1px;height:47px;background:#d6d6d6;"></div><div class="t " style="left:914px;top:622.14px;font-size:31.5px;line-height:31.5px;color:#2c3580;-webkit-text-stroke:0.6px currentColor;">9</div><div class="t " style="left:946.4px;top:622.52px;font-size:12.5px;line-height:12.5px;color:#3c4590;letter-spacing:-0.2px;">Total Associated</div><div class="t " style="left:946.4px;top:639.62px;font-size:12.5px;line-height:12.5px;color:#3c4590;letter-spacing:-0.1px;">Networks</div><div class="a" style="left:811px;top:687px;width:510px;height:44px;background:#eef5fc;border:1px solid #cde0f2;"></div><div class="t " style="left:832.2px;top:703.72px;font-size:12.5px;line-height:12.5px;color:#1f3264;-webkit-text-stroke:0.3px currentColor;letter-spacing:-0.2px;">Associated Networks</div><div class="t " style="left:1008.6px;top:703.72px;font-size:12.5px;line-height:12.5px;color:#1f3264;-webkit-text-stroke:0.3px currentColor;letter-spacing:-0.2px;">Profile</div><div class="t " style="left:1160.5px;top:696.12px;font-size:12.5px;line-height:12.5px;color:#1f3264;-webkit-text-stroke:0.3px currentColor;letter-spacing:-0.2px;">Configured</div><div class="t " style="left:1160.5px;top:709.62px;font-size:12.5px;line-height:12.5px;color:#1f3264;-webkit-text-stroke:0.3px currentColor;letter-spacing:-0.2px;">WAN(s)</div><div class="a" style="left:811px;top:731px;width:510px;height:71px;background:#f8f8f8;border-bottom:1px solid #e6e6e6;"></div><div class="t " style="left:831px;top:760.42px;font-size:12.5px;line-height:12.5px;color:#3a3a3a;letter-spacing:-0.2px;">default (0), Subnet512</div><div class="t " style="left:1008.6px;top:760.42px;font-size:12.5px;line-height:12.5px;color:#2a8cc4;letter-spacing:-0.2px;">Default</div><div class="t " style="left:1160.2px;top:760.24px;font-size:12px;line-height:12px;color:#444;letter-spacing:-1px;">--</div><div class="a" style="left:1271px;top:752px;width:29px;height:28px;border:1px solid #c5cfe0;border-radius:3px;background:#fff;"></div><svg class="a" style="left:1271px;top:752px;" width="29" height="28" viewBox="0 0 29 28"><g fill="none" stroke="#4a4f98" stroke-width="1.3" stroke-linecap="round"><path d="M6.9 18.7 A8.3 8.3 0 1 1 21.9 18.7"/><path d="M6.9 18.7 H10 M18.8 18.7 H21.9"/><path d="M14.6 18.2 L17.1 11.6" stroke-width="1.4"/><circle cx="14.3" cy="18.8" r="1.5"/></g><g stroke="#8a8fc0" stroke-width="0.8"><path d="M9 11 L9.9 11.9 M11.8 8.8 L12.3 9.9 M14.4 8.1 V9.3 M17 8.8 L16.5 9.9 M19.8 11 L18.9 11.9 M7.8 14.8 H9 M19.8 14.8 H21"/></g></svg><div class="a" style="left:811px;top:802px;width:510px;height:71px;background:#fff;border-bottom:1px solid #e6e6e6;"></div><div class="t " style="left:831px;top:821.82px;font-size:12.5px;line-height:12.5px;color:#3a3a3a;letter-spacing:-0.2px;">Network10 (10), Network40</div><div class="t " style="left:831px;top:839.62px;font-size:12.5px;line-height:12.5px;color:#3a3a3a;letter-spacing:-0.2px;">(40), Subnet612</div><div class="t " style="left:1008.6px;top:831.42px;font-size:12.5px;line-height:12.5px;color:#2a8cc4;letter-spacing:-0.2px;">Single Interface</div><div class="t " style="left:1160.2px;top:831.24px;font-size:12px;line-height:12px;color:#444;letter-spacing:-1px;">--</div><div class="a" style="left:1271px;top:823px;width:29px;height:28px;border:1px solid #c5cfe0;border-radius:3px;background:#fff;"></div><svg class="a" style="left:1271px;top:823px;" width="29" height="28" viewBox="0 0 29 28"><g fill="none" stroke="#4a4f98" stroke-width="1.3" stroke-linecap="round"><path d="M6.9 18.7 A8.3 8.3 0 1 1 21.9 18.7"/><path d="M6.9 18.7 H10 M18.8 18.7 H21.9"/><path d="M14.6 18.2 L17.1 11.6" stroke-width="1.4"/><circle cx="14.3" cy="18.8" r="1.5"/></g><g stroke="#8a8fc0" stroke-width="0.8"><path d="M9 11 L9.9 11.9 M11.8 8.8 L12.3 9.9 M14.4 8.1 V9.3 M17 8.8 L16.5 9.9 M19.8 11 L18.9 11.9 M7.8 14.8 H9 M19.8 14.8 H21"/></g></svg><div class="a" style="left:811px;top:873px;width:510px;height:71px;background:#f8f8f8;border-bottom:1px solid #e6e6e6;"></div><div class="t " style="left:831px;top:892.82px;font-size:12.5px;line-height:12.5px;color:#3a3a3a;letter-spacing:-0.2px;">Network20 (20), Subnet511,</div><div class="t " style="left:831px;top:910.62px;font-size:12.5px;line-height:12.5px;color:#3a3a3a;letter-spacing:-0.2px;">Subnet611, Subnet613</div><div class="t " style="left:1008.6px;top:902.42px;font-size:12.5px;line-height:12.5px;color:#2a8cc4;letter-spacing:-0.2px;">wan_profile</div><div class="t " style="left:1160.2px;top:902.24px;font-size:12px;line-height:12px;color:#444;letter-spacing:-1px;">--</div><div class="a" style="left:1271px;top:894px;width:29px;height:28px;border:1px solid #c5cfe0;border-radius:3px;background:#fff;"></div><svg class="a" style="left:1271px;top:894px;" width="29" height="28" viewBox="0 0 29 28"><g fill="none" stroke="#4a4f98" stroke-width="1.3" stroke-linecap="round"><path d="M6.9 18.7 A8.3 8.3 0 1 1 21.9 18.7"/><path d="M6.9 18.7 H10 M18.8 18.7 H21.9"/><path d="M14.6 18.2 L17.1 11.6" stroke-width="1.4"/><circle cx="14.3" cy="18.8" r="1.5"/></g><g stroke="#8a8fc0" stroke-width="0.8"><path d="M9 11 L9.9 11.9 M11.8 8.8 L12.3 9.9 M14.4 8.1 V9.3 M17 8.8 L16.5 9.9 M19.8 11 L18.9 11.9 M7.8 14.8 H9 M19.8 14.8 H21"/></g></svg>
</body></html>
